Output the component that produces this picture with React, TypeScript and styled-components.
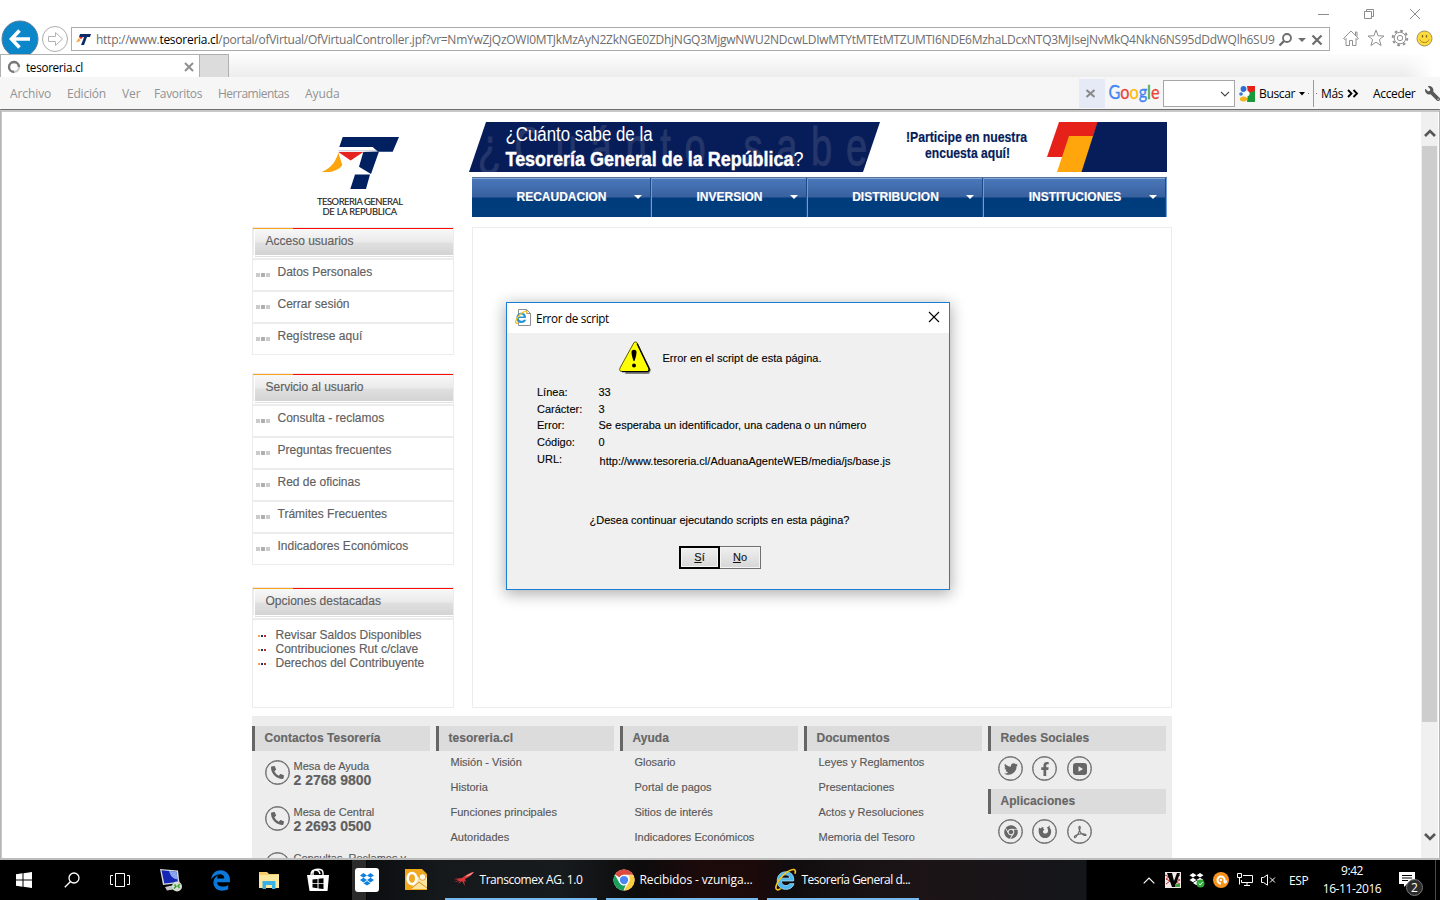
import React from 'react';
import styled, { createGlobalStyle, css } from 'styled-components';
import { FaTwitter, FaFacebookF, FaPhoneAlt, FaChrome, FaEdgeLegacy, FaWrench } from 'react-icons/fa';

const UI = "'Open Sans', 'Noto Sans', sans-serif";
const WEB = "'Liberation Sans', Arial, sans-serif";

const GlobalStyle = createGlobalStyle`
  * { box-sizing: border-box; }
  html, body { margin: 0; padding: 0; background: #fff; overflow: hidden; }
  svg { display: block; flex: none; }
`;

const Screen = styled.div`
  position: relative;
  width: 1440px;
  height: 900px;
  overflow: hidden;
  display: flex;
  flex-direction: column;
  background: #fff;
  font-family: ${UI};
  font-size: 12px;
  color: #000;
  white-space: nowrap;
`;

/* ---------- browser chrome ---------- */
const TitleBar = styled.div`
  height: 27px;
  flex: none;
  display: flex;
  justify-content: flex-end;
  align-items: flex-start;
  padding: 8px 19px 0 0;
  gap: 34px;
`;
const AddressRow = styled.div`
  height: 27px;
  flex: none;
  display: flex;
  align-items: flex-start;
`;
const NavButtons = styled.div`
  width: 71px;
  height: 27px;
  flex: none;
  overflow: visible;
  & > svg { margin-top: -8px; }
`;
const AddressBox = styled.div`
  width: 1259px;
  height: 24px;
  border: 1px solid #ababab;
  background: #fff;
  display: flex;
  align-items: center;
  padding: 1px 6px 0 4px;
`;
const Url = styled.div`
  width: 1181px;
  flex: none;
  margin-left: 4px;
  overflow: hidden;
  color: #6d6d6d;
  letter-spacing: -0.263px;
  line-height: 20px;
  b { font-weight: 400; color: #000; }
`;
const AddressTools = styled.div`
  display: flex;
  align-items: center;
  gap: 5px;
  margin-left: 1px;
`;
const BrowserTools = styled.div`
  display: flex;
  align-items: center;
  gap: 6.500px;
  padding: 2px 0 0 12px;
`;
const TabRow = styled.div`
  position: relative;
  height: 23px;
  flex: none;
  display: flex;
  background: linear-gradient(#fdfdfd, #ececec);
  &::after {
    content: '';
    flex: 1;
    background: linear-gradient(90deg, rgba(255,255,255,0) 97%, #fff 99.5%);
  }
`;
const Tab = styled.div`
  width: 200px;
  height: 23px;
  border: 1px solid #b0b0b0;
  border-bottom: 0;
  background: #fff;
  display: flex;
  align-items: center;
  padding: 1px 5px 0 6px;
  gap: 5px;
  span { flex: 1; font-size: 11.700px; letter-spacing: -0.3px; }
`;
const NewTab = styled.div`
  width: 29px;
  height: 23px;
  border: 1px solid #b0b0b0;
  border-left: 0;
  border-bottom: 0;
  background: #dcdcdc;
`;
const MenuBar = styled.div`
  height: 32px;
  flex: none;
  display: flex;
  align-items: center;
  background: #f6f6f6;
  padding: 1px 0 0 10px;
`;
const MenuItem = styled.div<{ $w: number; $ls?: number }>`
  width: ${(p) => p.$w}px;
  color: #929292;
  letter-spacing: ${(p) => p.$ls ?? -0.1}px;
`;
const GoogleBar = styled.div`
  margin-left: auto;
  width: 361px;
  height: 30px;
  display: flex;
  align-items: center;
`;
const CloseTile = styled.div`
  width: 26px;
  height: 29px;
  background: #e6eaf7;
  display: flex;
  align-items: center;
  justify-content: center;
  padding-right: 3px;
`;
const Combo = styled.div`
  width: 72px;
  height: 27px;
  border: 1px solid #a6a6a6;
  background: #fff;
  display: flex;
  align-items: center;
  justify-content: flex-end;
  padding-right: 4px;
  margin-right: 4px;
`;
const ToolText = styled.span<{ $w: number }>`
  width: ${(p) => p.$w}px;
  letter-spacing: -0.35px;
`;
const ToolSep = styled.div`
  width: 1px;
  height: 27px;
  background: #9a9a9a;
`;

/* ---------- viewport ---------- */
const Viewport = styled.div`
  height: 751px;
  flex: none;
  display: flex;
  border-top: 1px solid #6e6e6e;
  border-left: 1px solid #b4b4b4;
  border-right: 1px solid #b4b4b4;
  border-bottom: 2px solid #bcbcbc;
  box-shadow: inset 1px 2px 0 #c8c8c8;
  padding: 2px 1px 0 1px;
`;
const Page = styled.div`
  flex: 1;
  height: 746px;
  overflow: hidden;
  padding: 10px 0 0 250px;
  font-family: ${WEB};
  color: #606060;
  -webkit-text-stroke-width: 0.15px;
`;
const ScrollTrack = styled.div`
  width: 17px;
  height: 746px;
  background: #f0f0f0;
  display: flex;
  flex-direction: column;
  align-items: center;
`;
const ScrollArrow = styled.div<{ $h: number; $top?: number; $end?: boolean }>`
  height: ${(p) => p.$h}px;
  flex: none;
  display: flex;
  align-items: center;
  padding-top: ${(p) => p.$top || 0}px;
  margin-top: ${(p) => (p.$end ? 'auto' : 0)};
`;
const Thumb = styled.div`
  width: 15px;
  height: 576px;
  flex: none;
  background: #cdcdcd;
`;

const SiteHeader = styled.header`
  display: flex;
  height: 105px;
`;
const LogoCell = styled.div`
  width: 217px;
  padding: 14px 0 0 63px;
`;
const HeaderRight = styled.div`
  width: 703px;
`;
const SiteNav = styled.nav`
  display: flex;
  width: 695px;
  height: 40px;
  margin: 5px 0 0 3px;
  border-top: 1px solid #54749e;
  box-shadow: inset 0 1px 0 #86a8d4;
  background: linear-gradient(#4b79bb 0, #38609f 19px, #003c7c 20px, #003e7e 100%);
`;
const NavItem = styled.div<{ $w: number }>`
  width: ${(p) => p.$w}px;
  height: 39px;
  display: flex;
  align-items: center;
  justify-content: center;
  position: relative;
  color: #fff;
  font-weight: 700;
  font-size: 12px;
  padding-bottom: 1px;
  border-right: 1px solid #6f9ad3;
  box-shadow: inset -1px 0 0 #1d4a88;
`;
const NavCaret = styled.i`
  position: absolute;
  right: 9px;
  top: 17px;
  border: 4px solid transparent;
  border-top-color: #fff;
  border-bottom: 0;
`;

const Columns = styled.div`
  display: flex;
  height: 481px;
`;
const Sidebar = styled.aside`
  width: 202px;
  margin-right: 18px;
`;
const Box = styled.section<{ $h: number; $gap: number }>`
  height: ${(p) => p.$h}px;
  margin-bottom: ${(p) => p.$gap}px;
  border: 1px solid #ececec;
`;
const BoxHead = styled.div`
  height: 30px;
  background: linear-gradient(90deg, #f9a31a 40px, #fb0a06 40px) top / 100% 1px no-repeat;
  padding: 1px 0 0 2px;
  & > div {
    height: 26px;
    padding: 0 0 0 10.500px;
    line-height: 24px;
    font-size: 12px;
    background: linear-gradient(#f8f8f8 0, #eaeaea 13px, #e0e0e0 14px, #d3d3d3 100%);
    box-shadow: 0 1px 0 #fff, 0 2px 0 #e0e0e0, -1px 0 0 #fff, -2px 0 0 #ececec;
  }
`;
const BoxItem = styled.div`
  height: 32px;
  border-top: 2px solid #ececec;
  display: flex;
  padding-left: 3px;
  font-size: 12px;
  line-height: 24px;
  & > svg { margin: 13px 7.500px 0 0; }
`;
const Featured = styled.div`
  border-top: 2px solid #ececec;
  padding-top: 8px;
`;
const FeaturedItem = styled.div`
  height: 14px;
  display: flex;
  align-items: center;
  font-size: 12px;
  line-height: 14px;
  padding-left: 5px;
  gap: 9.500px;
  & > svg { margin-top: 2px; }
`;
const MainPanel = styled.main`
  width: 700px;
  height: 481px;
  border: 1px solid #ececec;
`;

const Footer = styled.footer`
  display: flex;
  gap: 6px;
  width: 920px;
  height: 200px;
  margin-top: 8px;
  padding-top: 10px;
  background: #ededed;
`;
const FootCol = styled.div`
  width: 178px;
`;
const FootHead = styled.div`
  height: 25px;
  line-height: 24px;
  border-left: 3px solid #666;
  background: #dcdcdc;
  padding-left: 9.500px;
  font-size: 12px;
  font-weight: 700;
  color: #666;
  letter-spacing: 0.05px;
`;
const FootLink = styled.div`
  height: 25px;
  line-height: 23px;
  padding-left: 14.500px;
  font-size: 11px;
  color: #585858;
`;
const Phone = styled.div`
  display: flex;
  height: 46px;
  padding: 9px 0 0 13px;
  gap: 3.500px;
  font-size: 11px;
  line-height: 14px;
  color: #585858;
  b { display: block; font-size: 14px; line-height: 14px; color: #606060; }
`;
const Ring = styled.div`
  width: 25px;
  height: 25px;
  flex: none;
  border: 1px solid #666;
  box-shadow: inset 0 0 0 0.4px #666;
  border-radius: 50%;
  display: flex;
  align-items: center;
  justify-content: center;
  color: #666;
`;
const PhoneText = styled.div`
  margin-top: -1px;
`;
const RingRow = styled.div`
  display: flex;
  gap: 9px;
  padding: 5px 0 0 10px;
  height: 38px;
  & > :last-child { margin-left: 1px; }
`;

/* ---------- dialog ---------- */
const Dialog = styled.div`
  position: absolute;
  left: 506px;
  top: 302px;
  width: 444px;
  height: 288px;
  border: 1px solid #1a7fd4;
  background: #f0f0f0;
  box-shadow: 0 3px 14px 1px rgba(0, 0, 0, 0.32);
`;
const DialogTitle = styled.div`
  height: 30px;
  background: #fff;
  display: flex;
  align-items: center;
  padding: 0 9px 2px 8px;
  gap: 5px;
  span { flex: 1; font-size: 11.700px; letter-spacing: -0.33px; padding-top: 1px; }
`;
const DialogBody = styled.div`
  font-family: ${WEB};
  font-size: 11px;
  line-height: 14px;
  -webkit-text-stroke-width: 0.12px;
`;
const Message = styled.div`
  display: flex;
  align-items: center;
  height: 34px;
  margin: 8px 0 10px 112px;
  gap: 10.500px;
`;
const Field = styled.div<{ $shift?: boolean }>`
  display: flex;
  height: 16.650px;
  padding-left: 30px;
  span { width: 61.500px; }
  ${(p) => p.$shift && css`
    div { padding: 2px 0 0 1px; letter-spacing: 0.01px; }
  `}
`;
const Question = styled.div`
  margin: 44.500px 0 19px 82.500px;
`;
const Buttons = styled.div`
  display: flex;
  padding-left: 172px;
`;
const Button = styled.button<{ $main?: boolean }>`
  width: 41px;
  height: 23px;
  padding: 0;
  font: 11px ${WEB};
  color: #111;
  border: ${(p) => (p.$main ? '2px solid #000' : '1px solid #707070')};
  border-left-width: ${(p) => (p.$main ? 2 : 0)}px;
  background: linear-gradient(#f0f0f0, #d6d6d6);
  box-shadow: inset 0 0 0 1px #f4f4f4;
`;

/* ---------- taskbar ---------- */
const Taskbar = styled.div`
  height: 40px;
  flex: none;
  display: flex;
  background: linear-gradient(90deg, #000 366px, #0c0e10 367px, #15191b 440px, #171b1e 560px, #0d0b0c 640px, #1d0a0b 700px, #1c090a 755px, #100c0e 790px, #191315 870px, #1c1416 925px, #14161a 1086px, #000 1087px);
  color: #fff;
`;
const Slot = styled.div<{ $w: number; $lit?: boolean; $push?: number }>`
  width: ${(p) => p.$w}px;
  height: 40px;
  flex: none;
  display: flex;
  align-items: center;
  justify-content: center;
  padding-left: ${(p) => p.$push || 0}px;
  ${(p) => p.$lit && css`background: linear-gradient(90deg, #2b2b2b 14px, transparent 14px);`}
`;
const Task = styled.div<{ $ls: number }>`
  width: 152px;
  height: 40px;
  flex: none;
  margin-right: 9px;
  border-bottom: 2px solid #76b9ed;
  display: flex;
  align-items: center;
  padding: 1px 0 0 7px;
  gap: 4.500px;
  letter-spacing: ${(p) => p.$ls}px;
`;
const Tray = styled.div`
  margin-left: auto;
  display: flex;
  width: 301px;
`;
const Clock = styled.div`
  width: 72px;
  flex: none;
  text-align: center;
  line-height: 18px;
  padding-top: 2px;
  letter-spacing: -0.4px;
`;
const Notifications = styled.div`
  position: relative;
  width: 47px;
  flex: none;
  padding: 12px 0 0 11px;
`;
const Badge = styled.div`
  position: absolute;
  left: 18px;
  top: 19px;
  width: 17px;
  height: 17px;
  border-radius: 50%;
  border: 1px solid #777;
  background: #2c2c2c;
  text-align: center;
  font-size: 12px;
  line-height: 15px;
`;
const ShowDesktop = styled.div`
  width: 5px;
  border-left: 1px solid #4a4a4a;
`;

const Dots = () => (
  <svg width="14" height="4"><path d="M0 0h4v4H0zM10 0h4v4h-4z" fill="#cbcbcb" /><path d="M5 0h4v4H5z" fill="#b0b0b0" /></svg>
);
const TriDots = () => (
  <svg width="8" height="2"><path d="M0 0h2v2H0z" fill="#f5a04a" /><path d="M3 0h2v2H3z" fill="#12366f" /><path d="M6 0h2v2H6z" fill="#c62a28" /></svg>
);

const Logo = () => (
  <svg width="90" height="81" viewBox="0 0 90 81">
    <path d="M27.700 1H84l-6.300 14.800H63L57.700 11H24.300z" fill="#00205f" />
    <path d="M23.500 14.800H62" stroke="#9aa3b8" strokeWidth=".6" />
    <path d="M48.300 16L64 15.600 56 38 44 30.700z" fill="#00205f" />
    <path d="M40 38.500h15L51 53H35.300z" fill="#00205f" />
    <path d="M23.300 16h25L35.700 24.500z" fill="#e52320" />
    <path d="M23.300 16.700l4 12.300c-4 6-12 8-20.600 6.700 9-3 14-10 16.600-19z" fill="#fda50c" />
    <g fontFamily="'Lato', sans-serif" fontSize="9.4" fill="#222" stroke="#222" strokeWidth=".12">
      <text x="2" y="68.500" textLength="86">TESORERIA GENERAL</text>
      <text x="7.500" y="79" textLength="74.500">DE LA REPUBLICA</text>
    </g>
  </svg>
);

const Banner = () => (
  <svg width="698" height="50" viewBox="0 0 698 50" fontFamily="'Liberation Sans Narrow', 'Liberation Sans', sans-serif">
    <path d="M17 0h394l-17 50H0z" fill="#061d5a" />
    <text x="12" y="43" fontSize="53" fill="#25366a" stroke="#25366a" strokeWidth="1" fontFamily="'Liberation Sans', sans-serif" textLength="541" transform="scale(.72 1)">¿Cuánto sabe</text>
    <text x="36.500" y="19" fontSize="20" fill="#fff" textLength="147" lengthAdjust="spacingAndGlyphs">¿Cuánto sabe de la</text>
    <text x="36.500" y="44" fontSize="21" fill="#fff" textLength="298" lengthAdjust="spacingAndGlyphs"><tspan fontWeight="700" stroke="#fff" strokeWidth=".4">Tesorería General de la República</tspan>?</text>
    <g fill="#061d5a" fontSize="14" fontWeight="700" stroke="#061d5a" strokeWidth=".2">
      <text x="437" y="20" textLength="121" lengthAdjust="spacingAndGlyphs">!Participe en nuestra</text>
      <text x="456" y="36" textLength="85" lengthAdjust="spacingAndGlyphs">encuesta aquí!</text>
    </g>
    <path d="M590 0h39L617 35H578z" fill="#e52119" />
    <path d="M600 14h25L613 50H588z" fill="#fea60c" />
    <path d="M628.500 0H698v50h-85.500z" fill="#061d5a" />
  </svg>
);

const IEIcon = ({ size }: { size: number }) => (
  <svg width={size} height={size} viewBox="0 0 24 24" fill="none">
    <path d="M20.500 13.500H7.500c.3 3.200 2.300 4.800 4.900 4.800 1.900 0 3.200-.7 3.900-1.900h4.600c-1.200 3.800-4.300 5.900-8.500 5.900-5.300 0-9-3.600-9-9.100 0-5.400 3.700-9.200 9-9.200 5.600 0 8.700 3.900 8.100 9.500z M7.600 10.600h8.800c-.3-2.300-1.900-3.500-4.200-3.500s-4.100 1.200-4.600 3.500z" fill="#4bb9ee" fillRule="evenodd" stroke="#9fdcf8" strokeWidth=".9" />
    <path d="M21.800 6c.9-2.300.6-4-.9-4.400C17.500.8 9.500 6 5 13c-2.900 4.500-4 8.500-2 9.600.9.500 2.400.1 4-1" stroke="#f4c320" strokeWidth="1.700" />
  </svg>
);

const ChromeIcon = () => (
  <svg width="22" height="22" viewBox="0 0 48 48">
    <circle cx="24" cy="24" r="23" fill="#fff" />
    <path d="M24 1a23 23 0 0 1 20 11.500H24a11.500 11.500 0 0 0-10 5.800L4.500 12A23 23 0 0 1 24 1z" fill="#dd4b3e" />
    <path d="M44.500 13.500A23 23 0 0 1 24 47l10-17.500a11.500 11.500 0 0 0-1-16z" fill="#fdcd40" />
    <path d="M4 12.500l10 17.300a11.500 11.500 0 0 0 13.500 5.200L23 47A23 23 0 0 1 4 12.500z" fill="#1a9f5c" />
    <circle cx="24" cy="24" r="11.300" fill="#fff" />
    <circle cx="24" cy="24" r="9" fill="#4a87f2" />
  </svg>
);

const Section = ({ title, items, h, gap }: { title: string; items: string[]; h: number; gap: number }) => (
  <Box $h={h} $gap={gap}>
    <BoxHead><div>{title}</div></BoxHead>
    {items.map((t) => <BoxItem key={t}><Dots />{t}</BoxItem>)}
  </Box>
);

const LinkColumn = ({ title, items }: { title: string; items: string[] }) => (
  <FootCol>
    <FootHead>{title}</FootHead>
    {items.map((t) => <FootLink key={t}>{t}</FootLink>)}
  </FootCol>
);

const Contact = ({ name, number }: { name: string; number: string }) => (
  <Phone>
    <Ring><FaPhoneAlt size={13} /></Ring>
    <PhoneText>{name}<b>{number}</b></PhoneText>
  </Phone>
);

export default function App() {
  return (
    <Screen>
      <GlobalStyle />
      <TitleBar>
        <svg width="12" height="12"><path d="M1 6.500h11" stroke="#8c8c8c" /></svg>
        <svg width="12" height="12" fill="none" stroke="#8c8c8c"><path d="M1.500 3.500h7v7h-7zM3.500 3.500v-2h7v7h-2" /></svg>
        <svg width="12" height="12" stroke="#8c8c8c"><path d="M1 1l10 10M11 1L1 11" /></svg>
      </TitleBar>

      <AddressRow>
        <NavButtons>
          <svg width="71" height="35" fill="none">
            <circle cx="20" cy="20" r="18" fill="#0a86c9" stroke="#5b7f95" strokeWidth="1" />
            <path d="M30 20H12M19.500 11.500L11.500 20l8 8.500" stroke="#fff" strokeWidth="3.600" />
            <circle cx="55" cy="20" r="12.500" stroke="#adadad" />
            <path d="M48.500 17.500h7v-4l7 6.500-7 6.500v-4h-7z" stroke="#b3b3b3" />
          </svg>
        </NavButtons>
        <AddressBox>
          <svg width="16" height="14" viewBox="0 0 16 14"><path d="M4 1h11l-1 3h-3L8 12H5l2-5 1-3H3z" fill="#0d2a66" /><path d="M3 4h4L5 6.500z" fill="#e03a2c" /><path d="M3 4.500L4.500 8 0 9.500z" fill="#f5a94a" /></svg>
          <Url>http://www.<b>tesoreria.cl</b>/portal/ofVirtual/OfVirtualController.jpf?vr=NmYwZjQzOWI0MTJkMzAyN2ZkNGE0ZDhjNGQ3MjgwNWU2NDcwLDIwMTYtMTEtMTZUMTI6NDE6MzhaLDcxNTQ3MjIsejNvMkQ4NkN6NS95dDdWQlh6SU9</Url>
          <AddressTools>
            <svg width="15" height="15" fill="none" stroke="#6d6d6d"><circle cx="9" cy="6" r="4" strokeWidth="1.800" /><path d="M6 9L1.500 13.500" strokeWidth="2.400" /></svg>
            <svg width="8" height="4"><path d="M0 0h8L4 4z" fill="#6d6d6d" /></svg>
            <svg width="12" height="12" stroke="#6d6d6d" strokeWidth="2.200"><path d="M1.500 1.500l9 9M10.500 1.500l-9 9" /></svg>
          </AddressTools>
        </AddressBox>
        <BrowserTools>
          <svg width="18" height="18" fill="none" stroke="#929292"><path d="M1.500 9.500L9 2l7.500 7.500-1.500 1-1-1V16.500h-3.500v-5h-3v5H4V9.500l-1 1zM13.500 6V3h1.500v4.500" /></svg>
          <svg width="18" height="18" fill="none" stroke="#929292"><path d="M9 1l2.100 5.800 5.900.2-4.600 3.600 1.700 5.900L9 13.200l-5.100 3.300 1.700-5.900L1 7l5.900-.2z" /></svg>
          <svg width="18" height="18" viewBox="0 0 18 18" fill="none" stroke="#929292"><circle cx="9" cy="9" r="2.700" /><circle cx="9" cy="9" r="5.800" /><circle cx="9" cy="9" r="7.300" strokeWidth="2" strokeDasharray="2.700 3.033" /></svg>
          <svg width="17" height="17" viewBox="0 0 17 17"><circle cx="8.500" cy="8.500" r="7.500" fill="#fddb3a" stroke="#9b9161" /><path d="M6.500 5v2.500M10.500 5v2.500" stroke="#7b6420" strokeWidth="1.300" /><path d="M4 9.500c1 4 8 4 9 0" fill="none" stroke="#a8842a" /></svg>
        </BrowserTools>
      </AddressRow>

      <TabRow>
        <Tab>
          <svg width="14" height="14" fill="none" strokeWidth="2.300"><circle cx="7" cy="7" r="5" stroke="#c9c9c9" /><path d="M7 12A5 5 0 1 1 12 7" stroke="#777" /></svg>
          <span>tesoreria.cl</span>
          <svg width="10" height="10" stroke="#8e8e8e" strokeWidth="1.900"><path d="M1 1l8 8M9 1L1 9" /></svg>
        </Tab>
        <NewTab />
      </TabRow>

      <MenuBar>
        <MenuItem $w={57}>Archivo</MenuItem>
        <MenuItem $w={55} $ls={-0.2}>Edición</MenuItem>
        <MenuItem $w={32}>Ver</MenuItem>
        <MenuItem $w={64} $ls={-0.35}>Favoritos</MenuItem>
        <MenuItem $w={87} $ls={-0.5}>Herramientas</MenuItem>
        <MenuItem $w={60}>Ayuda</MenuItem>
        <GoogleBar>
          <CloseTile><svg width="9" height="9" stroke="#8b8b8b" strokeWidth="2"><path d="M.5 1l8 7M8.500 1l-8 7" /></svg></CloseTile>
          <svg width="58" height="26" viewBox="0 0 58 26" fontFamily="'Lato', sans-serif" fontSize="18.500">
            <text x="3.500" y="18" textLength="51" lengthAdjust="spacingAndGlyphs" strokeWidth=".3">
              <tspan fill="#4285f4" stroke="#4285f4">G</tspan><tspan fill="#ea4335" stroke="#ea4335">o</tspan><tspan fill="#fbbc05" stroke="#fbbc05">o</tspan><tspan fill="#4285f4" stroke="#4285f4">g</tspan><tspan fill="#34a853" stroke="#34a853">l</tspan><tspan fill="#ea4335" stroke="#ea4335">e</tspan>
            </text>
          </svg>
          <Combo><svg width="10" height="6" fill="none" stroke="#444" strokeWidth="1.200"><path d="M1 .8l4 4 4-4" /></svg></Combo>
          <svg width="20" height="16" viewBox="0 0 20 16">
            <path d="M8 0h8v7H9z" fill="#e2231a" /><path d="M9 7l7-2v11H8z" fill="#189a3b" />
            <circle cx="4.500" cy="3" r="2.900" fill="#2b6fd6" /><circle cx="2" cy="8" r="1.800" fill="#3a78d8" /><circle cx="8" cy="7.500" r="2.600" fill="#fff" /><ellipse cx="4.500" cy="13" rx="3.600" ry="2.500" fill="#f7b31b" />
          </svg>
          <ToolText $w={40}>Buscar</ToolText>
          <svg width="14" height="4"><path d="M0 0h6L3 3.500z" fill="#000" /><path d="M9 1h1v1H9z" fill="#777" /></svg>
          <ToolSep />
          <svg width="7" height="4"><path d="M2 1h1v1H2z" fill="#777" /></svg>
          <ToolText $w={26}>Más</ToolText>
          <svg width="26" height="9" fill="none" stroke="#000" strokeWidth="1.800"><path d="M1 1l3.500 3.500L1 8M6.500 1L10 4.500 6.500 8" /></svg>
          <ToolText $w={52}>Acceder</ToolText>
          <FaWrench size={15} color="#585858" transform="scale(-1 1)" />
        </GoogleBar>
      </MenuBar>

      <Viewport>
        <Page>
          <SiteHeader>
            <LogoCell><Logo /></LogoCell>
            <HeaderRight>
              <Banner />
              <SiteNav>
                {([['RECAUDACION', 180], ['INVERSION', 156], ['DISTRIBUCION', 176], ['INSTITUCIONES', 183]] as [string, number][]).map(([t, w]) => (
                  <NavItem key={t} $w={w}>{t}<NavCaret /></NavItem>
                ))}
              </SiteNav>
            </HeaderRight>
          </SiteHeader>
          <Columns>
            <Sidebar>
              <Section title="Acceso usuarios" h={128} gap={18} items={['Datos Personales', 'Cerrar sesión', 'Regístrese aquí']} />
              <Section title="Servicio al usuario" h={192} gap={22} items={['Consulta - reclamos', 'Preguntas frecuentes', 'Red de oficinas', 'Trámites Frecuentes', 'Indicadores Económicos']} />
              <Box $h={121} $gap={0}>
                <BoxHead><div>Opciones destacadas</div></BoxHead>
                <Featured>
                  {['Revisar Saldos Disponibles', 'Contribuciones Rut c/clave', 'Derechos del Contribuyente'].map((t) => (
                    <FeaturedItem key={t}><TriDots />{t}</FeaturedItem>
                  ))}
                </Featured>
              </Box>
            </Sidebar>
            <MainPanel />
          </Columns>
          <Footer>
            <FootCol>
              <FootHead>Contactos Tesorería</FootHead>
              <Contact name="Mesa de Ayuda" number="2 2768 9800" />
              <Contact name="Mesa de Central" number="2 2693 0500" />
              <Contact name="Consultas, Reclamos y" number="" />
            </FootCol>
            <LinkColumn title="tesoreria.cl" items={['Misión - Visión', 'Historia', 'Funciones principales', 'Autoridades']} />
            <LinkColumn title="Ayuda" items={['Glosario', 'Portal de pagos', 'Sitios de interés', 'Indicadores Económicos', 'Trámites']} />
            <LinkColumn title="Documentos" items={['Leyes y Reglamentos', 'Presentaciones', 'Actos y Resoluciones', 'Memoria del Tesoro']} />
            <FootCol>
              <FootHead>Redes Sociales</FootHead>
              <RingRow>
                <Ring><FaTwitter size={14} /></Ring>
                <Ring><FaFacebookF size={14} /></Ring>
                <Ring><svg width="14" height="12"><rect width="14" height="12" rx="3" fill="#666" /><path d="M5.500 3.200v5.600L10 6z" fill="#ededed" /></svg></Ring>
              </RingRow>
              <FootHead>Aplicaciones</FootHead>
              <RingRow>
                <Ring><FaChrome size={14} /></Ring>
                <Ring><svg width="14" height="14" fill="#666"><path d="M1 2.500l1.500 1C3.500 2 5 2 6 2.300 4.800 3 5 4 6.500 4.500 5.500 5.500 4.800 6 5 7c.5 2 3.500 2 4.500.5C10.500 6 10 4 9 2.500L12 .5l-.5 2C14 5 13.500 9 11.500 11.200c-2.300 2.500-6.700 2.500-9 0C.5 9 .3 5.500 1 2.500z" /></svg></Ring>
                <Ring><svg width="14" height="14" fill="none" stroke="#666" strokeWidth="1.100"><path d="M1.500 12.500C.5 11 4 9.500 7 9c3.500-.6 6.500 0 6 1.200-.5 1-4-.7-5.500-3C6 5 5.300 1.200 6.500 1.200 8 1.200 7 5 5.500 8 4 11 2.200 13.200 1.500 12.500z" /></svg></Ring>
              </RingRow>
            </FootCol>
          </Footer>
        </Page>
        <ScrollTrack>
          <ScrollArrow $h={34} $top={8}><svg width="12" height="8" fill="none" stroke="#555" strokeWidth="2.600"><path d="M1 7l5-5 5 5" /></svg></ScrollArrow>
          <Thumb />
          <ScrollArrow $h={42} $end><svg width="12" height="8" fill="none" stroke="#555" strokeWidth="2.600"><path d="M1 1l5 5 5-5" /></svg></ScrollArrow>
        </ScrollTrack>
      </Viewport>

      <Taskbar>
        <Slot $w={48}><svg width="16" height="16" fill="#fff"><path d="M0 2.200l6.500-.9v6.200H0zM7.500 1.200L16 0v7.500H7.500zM0 8.500h6.500v6.200L0 13.800zM7.500 8.500H16V16l-8.500-1.200z" /></svg></Slot>
        <Slot $w={48}><svg width="16" height="16" fill="none" stroke="#fff" strokeWidth="1.300"><circle cx="10" cy="6" r="5" /><path d="M6.500 9.500L.8 15.300" /></svg></Slot>
        <Slot $w={48}><svg width="20" height="14" fill="none" stroke="#fff"><path d="M5.500.5h9v13h-9zM3 2.500H.5v9H3M17 2.500h2.500v9H17" /></svg></Slot>
        <Slot $w={54}>
          <svg width="24" height="24" viewBox="0 0 24 24"><path d="M1 1l18 1.500L20.500 15 4 17z" fill="#d5d7da" /><path d="M2.500 2.300l15 1.400 1.300 10.300-13.500 1.500z" fill="#1526b4" /><path d="M10 3l7.500.7.900 7.500c-4 0-7-3-8.400-8.200z" fill="#8aa5ee" /><path d="M6 19l9-2 2 4-9 1.500z" fill="#c4c6c9" /><circle cx="18" cy="18.500" r="5" fill="#d9dcd6" /><path d="M15 20.500l2-2-1.500-2M21 16l-2 2 1.500 2" stroke="#36a42f" strokeWidth="1.500" fill="none" /></svg>
        </Slot>
        <Slot $w={44}><FaEdgeLegacy size={21} color="#0b79d9" /></Slot>
        <Slot $w={54}><svg width="22" height="20" viewBox="0 0 22 20"><path d="M1 2h8l2 2h10v14H1z" fill="#f4cf6b" /><path d="M1 5h20v13H1z" fill="#fde79c" /><path d="M4.500 19v-8h13v8H14v-4H8v4z" fill="#38b1e6" /></svg></Slot>
        <Slot $w={44}><svg width="22" height="24" viewBox="0 0 22 24" fill="none"><path d="M0 7h22l-1.500 16h-18z" fill="#fff" /><path d="M6 9V5c0-5 10-5 10 0v4M4 7c0-7 8-6 9-1" stroke="#fff" strokeWidth="1.400" /><path d="M5.500 11.500l5-.6v4.300h-5zM11.500 10.800l5-.6v5h-5zM5.500 16h5v4.200l-5-.6zM11.500 16h5v5l-5-.6z" fill="#000" /></svg></Slot>
        <Slot $w={12} />
        <Slot $w={30} $lit>
          <svg width="24" height="24" viewBox="0 0 24 24"><rect width="24" height="24" rx="3" fill="#fff" /><path d="M8.500 5L12 7.400 8.500 9.700 5 7.400zM15.500 5L19 7.400l-3.500 2.300L12 7.400zM5 12l3.500-2.300L12 12l-3.500 2.400zM15.500 9.700L19 12l-3.500 2.400L12 12zM8.500 15.200L12 12.900l3.500 2.300L12 17.500z" fill="#1081de" /></svg>
        </Slot>
        <Slot $w={63} $push={4}>
          <svg width="24" height="24" viewBox="0 0 24 24"><path d="M1 1h17l5 5v16H1z" fill="#f0a91d" /><path d="M10 9h13v12H8z" fill="#fbe3a0" /><path d="M8 20l7-6 8 6" stroke="#d88b12" fill="none" /><ellipse cx="8" cy="10.500" rx="4.300" ry="5.500" fill="#f0a91d" stroke="#fff" strokeWidth="2.700" /><circle cx="18.500" cy="9" r="3.300" fill="#fff7df" stroke="#e1a53a" /></svg>
        </Slot>
        <Task $ls={-0.45}>
          <svg width="23" height="18" viewBox="0 0 23 18"><path d="M22 1c-2 3-5 5-9 7l1 3-2-1 1 5-3-5-4 3 2-3-6 1 5-2-5-1 8-1c4-3 8-6 12-6z" fill="#d9363b" /><path d="M22 1c-2 2-5 4-9 5 2-2 6-4 9-5z" fill="#f2b4b2" /></svg>
          Transcomex AG. 1.0
        </Task>
        <Task $ls={-0.12}><ChromeIcon />Recibidos - vzuniga...</Task>
        <Task $ls={-0.5}><IEIcon size={23} />Tesorería General d...</Task>
        <Tray>
          <Slot $w={20}><svg width="12" height="7" fill="none" stroke="#fff" strokeWidth="1.200"><path d="M.7 6.300L6 1l5.300 5.300" /></svg></Slot>
          <Slot $w={28}><svg width="16" height="16"><path d="M0 0h16v16H0z" fill="#f1e7e7" /><path d="M0 3l4 2-3 2 4 2-4 3M15 3l-4 3 4 2-4 2 4 2" stroke="#b33" fill="none" /><path d="M2 1h5l2 8 3-8h3L10 15H7z" fill="#000" /><path d="M10 12h5v3h-5z" fill="#3ba53b" /></svg></Slot>
          <Slot $w={20}><svg width="16" height="16" viewBox="0 0 16 16"><g fill="#fff"><path d="M4 1l3.500 2.300L4 5.600.5 3.300zM11 1l3.500 2.300L11 5.600 7.500 3.300zM.5 8L4 5.700 7.500 8 4 10.300zM11 5.700L14.500 8 11 10.300 7.500 8zM4 11l3.500-2.300L11 11l-3.500 2.300z" /></g><circle cx="11.500" cy="11.500" r="4" fill="#2fac3a" /><path d="M9.700 11.500l1.500 1.400 2.300-2.700" stroke="#fff" fill="none" /></svg></Slot>
          <Slot $w={28}><svg width="16" height="16" fill="none"><circle cx="8" cy="8" r="8" fill="#f7941d" /><path d="M8 11.500A3.500 3.500 0 1 1 11.500 8v1.500c0 2 2 1 1.500-1" stroke="#fff" strokeWidth="2" /><circle cx="8" cy="8" r="1.200" fill="#fff" /></svg></Slot>
          <Slot $w={20}><svg width="16" height="14" fill="none" stroke="#fff"><path d="M6 2.500h9.500v7H4.500V7M.5.500h4v4h-4zM2.500 4.500v7M7 12.500h6M10 9.500v3" /></svg></Slot>
          <Slot $w={26}><svg width="15" height="12" fill="none" stroke="#fff"><path d="M.5 3.500h2L6.500.8v10.400L2.500 8.500h-2zM9 3.500l5 5M14 3.500l-5 5" /></svg></Slot>
          <Slot $w={35}><ToolText $w={19}>ESP</ToolText></Slot>
          <Clock>9:42<br />16-11-2016</Clock>
          <Notifications>
            <svg width="16" height="16"><path d="M0 0h16v12H8l-3 3v-3H0z" fill="#fff" /><path d="M3 3.500h10M3 6h10M3 8.500h6" stroke="#000" /></svg>
            <Badge>2</Badge>
          </Notifications>
          <ShowDesktop />
        </Tray>
      </Taskbar>

      <Dialog>
        <DialogTitle>
          <svg width="16" height="17" viewBox="0 0 16 17"><path d="M3.500.5h8l4 4v12h-12zM11.500.5v4h4" fill="#fff" stroke="#8d8d8d" /><g transform="translate(-.5 1.500) scale(.56)"><path d="M20.500 13.500H7.500c.3 3.200 2.300 4.800 4.900 4.800 1.900 0 3.200-.7 3.900-1.900h4.600c-1.200 3.800-4.300 5.900-8.500 5.900-5.300 0-9-3.600-9-9.100 0-5.400 3.700-9.200 9-9.200 5.600 0 8.700 3.900 8.100 9.500z M7.600 10.600h8.800c-.3-2.300-1.900-3.500-4.200-3.500s-4.100 1.200-4.600 3.500z" fill="#2b93d6" fillRule="evenodd" /><path d="M21.800 6c.9-2.300.6-4-.9-4.400C17.500.8 9.500 6 5 13c-2.900 4.500-4 8.500-2 9.600.9.500 2.400.1 4-1" fill="none" stroke="#f4c320" strokeWidth="2.400" /></g></svg>
          <span>Error de script</span>
          <svg width="12" height="12" stroke="#000" strokeWidth="1.100"><path d="M1 1l10 10M11 1L1 11" /></svg>
        </DialogTitle>
        <DialogBody>
          <Message>
            <svg width="33" height="34" viewBox="0 0 33 34"><path d="M18 4l2 1 12 24-2 4H6z" fill="#808080" /><path d="M15 1.500c1.500-1 3-.5 3.500 1L30 27.500c.5 2-.5 3-2 3H3.500c-2.500 0-3.500-1-2.500-3.500z" fill="#ff0" stroke="#5c5c00" /><path d="M18 2.500L30 27.500c.5 2-.5 3.200-2 3.200H3" fill="none" stroke="#000" strokeWidth="1.300" /><path d="M12.500 11c0-3 5-3 5 0 0 3-1 6-2 9h-1c-1-3-2-6-2-9z" /><circle cx="15" cy="24.500" r="2" /></svg>
            Error en el script de esta página.
          </Message>
          <Field><span>Línea:</span><div>33</div></Field>
          <Field><span>Carácter:</span><div>3</div></Field>
          <Field><span>Error:</span><div>Se esperaba un identificador, una cadena o un número</div></Field>
          <Field><span>Código:</span><div>0</div></Field>
          <Field $shift><span>URL:</span><div>http://www.tesoreria.cl/AduanaAgenteWEB/media/js/base.js</div></Field>
          <Question>¿Desea continuar ejecutando scripts en esta página?</Question>
          <Buttons>
            <Button $main><u>S</u>í</Button>
            <Button><u>N</u>o</Button>
          </Buttons>
        </DialogBody>
      </Dialog>
    </Screen>
  );
}
